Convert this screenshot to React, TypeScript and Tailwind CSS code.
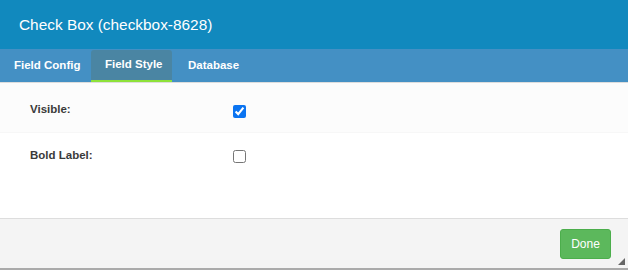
import React from "react";

export default function App() {
  return (
    <div className="w-[628px] h-[270px] flex flex-col bg-white overflow-hidden" style={{ fontFamily: '"Liberation Sans", Arial, sans-serif' }}>
      <div className="h-[49px] shrink-0 bg-[#1189be] flex items-center pl-[19px]">
        <span className="text-white text-[15.4px]">Check Box (checkbox-8628)</span>
      </div>
      <div className="h-[34px] shrink-0 bg-[#4490c4] flex items-end border-b border-[#dddddd]">
        <div className="h-[32px] w-[91px] pl-[14px] flex items-center text-white text-[11.5px] font-bold">Field Config</div>
        <div className="h-[32px] w-[81px] pl-[14px] flex items-center text-white text-[11.5px] font-bold bg-[#4a85a3] rounded-t-[3px] border-b-2 border-[#8ee23a]">Field Style</div>
        <div className="h-[32px] pl-[16px] flex items-center text-white text-[11.5px] font-bold">Database</div>
      </div>
      <div className="flex-1 flex flex-col">
        <div className="h-[50px] pt-[7px] flex items-center bg-[#fcfcfc] border-b border-[#f7f7f7]">
          <div className="w-[233px] pl-[30px] text-[11.5px] font-bold text-[#3a3a3a] pb-[2px]">Visible:</div>
          <input type="checkbox" defaultChecked className="w-[13px] h-[13px] m-0 accent-[#0b74f1]" />
        </div>
        <div className="h-[47px] flex items-center bg-white">
          <div className="w-[233px] pl-[30px] text-[11.5px] font-bold text-[#3a3a3a] pb-[2px]">Bold Label:</div>
          <input type="checkbox" className="w-[13px] h-[13px] m-0" />
        </div>
      </div>
      <div className="h-[52px] shrink-0 bg-[#f4f4f4] border-t border-[#dddddd] border-b-2 border-b-[#aaaaaa] flex items-center justify-end pr-[17px] relative">
        <button className="w-[51px] h-[30px] bg-[#5cb85c] border border-[#4cae4c] rounded-[3px] text-white text-[12px] mt-[1px]">Done</button>
        <svg className="absolute right-[3px] bottom-[3px]" width="7" height="7" viewBox="0 0 7 7">
          <path d="M7 0 L7 7 L0 7 Z" fill="#666666" />
        </svg>
      </div>
    </div>
  );
}
